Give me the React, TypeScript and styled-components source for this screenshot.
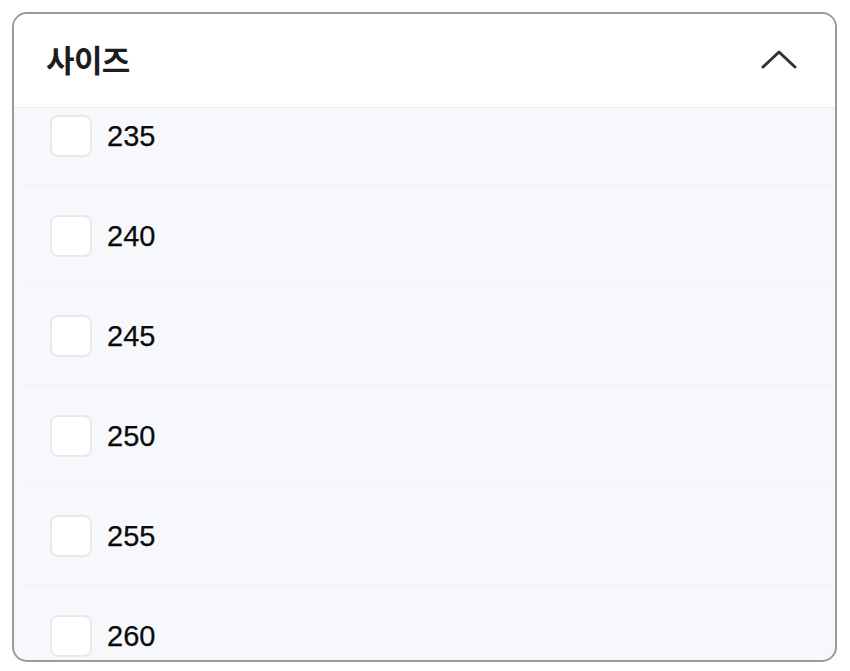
import React, { useLayoutEffect, useRef, useState } from "react";
import styled, { createGlobalStyle } from "styled-components";

const GlobalStyle = createGlobalStyle`
  html, body {
    margin: 0;
    padding: 0;
    background: #ffffff;
  }
  body {
    font-family: "Liberation Sans", "Noto Sans CJK KR", Arial, sans-serif;
  }
  * { box-sizing: border-box; }
`;

const Page = styled.div`
  padding: 12px 13px 9px 12px;
  height: 671px;
`;

const Panel = styled.section`
  height: 650px;
  border: 2px solid #9a9a9a;
  border-radius: 15px;
  overflow: hidden;
  display: flex;
  flex-direction: column;
  background: #f7f8fb;
`;

const Header = styled.button`
  flex: 0 0 auto;
  height: 94px;
  display: flex;
  align-items: center;
  justify-content: space-between;
  padding: 0 38px 3px 32px;
  background: #ffffff;
  border: 0;
  border-bottom: 1px solid #ebecef;
  cursor: pointer;
  text-align: left;
`;

const Title = styled.h2`
  margin: 0;
  font-family: "Noto Sans CJK KR", "Liberation Sans", sans-serif;
  font-size: 31px;
  font-weight: 700;
  line-height: 1.2;
  color: #1d1d1d;
  letter-spacing: -0.6px;
`;

const Chevron = styled.svg`
  width: 36px;
  height: 19px;
  display: block;
`;

const OptionList = styled.ul`
  flex: 1 1 auto;
  margin: 0;
  padding: 0;
  list-style: none;
  overflow-y: auto;
  scrollbar-width: none;
  &::-webkit-scrollbar { display: none; }
`;

const OptionRow = styled.li`
  height: 100px;
  display: flex;
  align-items: center;
  gap: 15px;
  padding-left: 36px;
  margin-left: 10px;
  border-bottom: 1px solid #f1f2f5;
  cursor: pointer;
`;

const Box = styled.span<{ $checked: boolean }>`
  width: 42px;
  height: 42px;
  margin-left: -10px;
  flex: 0 0 auto;
  border: 2px solid ${(p) => (p.$checked ? "#222" : "#e7e9ec")};
  border-radius: 8px;
  background: ${(p) => (p.$checked ? "#222" : "#ffffff")};
`;

const Label = styled.span`
  font-family: "Liberation Sans", Arial, sans-serif;
  font-size: 29px;
  color: #0b0b0b;
  line-height: 1;
  padding-top: 2px;
  -webkit-text-stroke: 0.25px #0b0b0b;
`;

const sizes = [230, 235, 240, 245, 250, 255, 260, 265];

export default function App() {
  const listRef = useRef<HTMLUListElement>(null);
  const [checked, setChecked] = useState<Record<number, boolean>>({});

  useLayoutEffect(() => {
    if (listRef.current) listRef.current.scrollTop = 122;
  }, []);

  return (
    <>
      <GlobalStyle />
      <Page>
        <Panel>
          <Header type="button">
            <Title>사이즈</Title>
            <Chevron viewBox="0 0 36 19" aria-hidden="true">
              <path
                d="M2 17 L18 2 L34 17"
                fill="none"
                stroke="#333333"
                strokeWidth="3"
                strokeLinecap="round"
                strokeLinejoin="round"
              />
            </Chevron>
          </Header>
          <OptionList ref={listRef}>
            {sizes.map((s) => (
              <OptionRow
                key={s}
                onClick={() => setChecked((c) => ({ ...c, [s]: !c[s] }))}
              >
                <Box $checked={!!checked[s]} />
                <Label>{s}</Label>
              </OptionRow>
            ))}
          </OptionList>
        </Panel>
      </Page>
    </>
  );
}
